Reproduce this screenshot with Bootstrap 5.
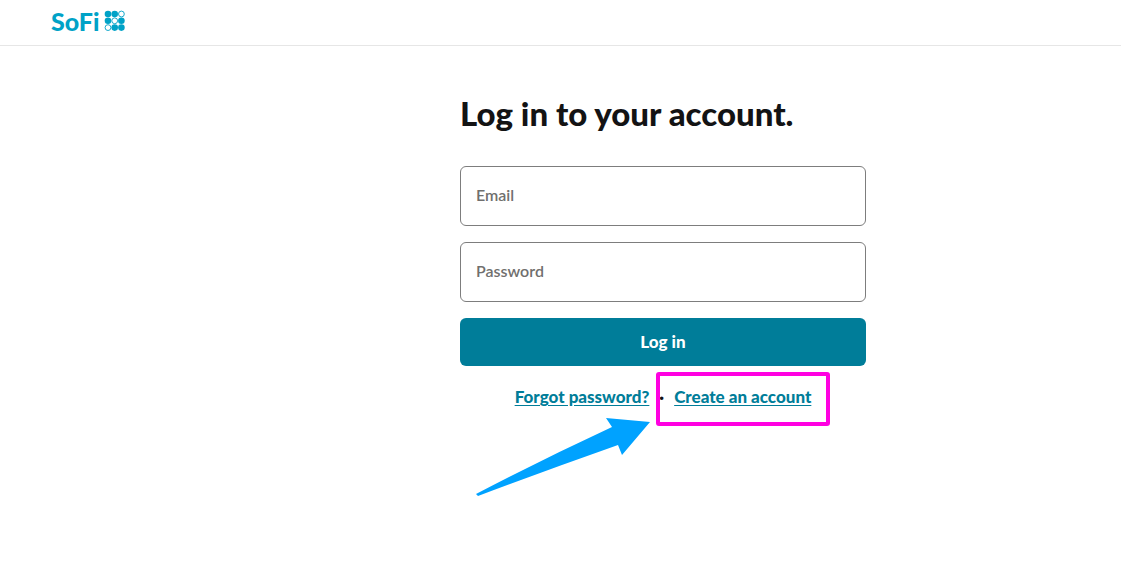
<!DOCTYPE html>
<html lang="en">
<head>
<meta charset="utf-8">
<meta name="viewport" content="width=device-width, initial-scale=1">
<title>Log in | SoFi</title>
<link href="https://cdn.jsdelivr.net/npm/bootstrap@5.3.0/dist/css/bootstrap.min.css" rel="stylesheet">
<style>
  :root { --teal: #007d99; --brand: #00a2c7; }
  body { font-family: Lato, "Liberation Sans", sans-serif; color: #131314; background: #fff; }
  .site-header { height: 46px; padding: 0 51px 4px; border-bottom: 1px solid #e6e6e6; }
  .brand { color: var(--brand); font-size: 25px; line-height: 40px; font-weight: 900; gap: 5px; }
  .login-area { padding: 47px 0 160px 205px; }
  .login-form { width: 406px; max-width: 100%; }
  .login-title { font-size: 33px; line-height: 40px; font-weight: 900; margin-bottom: 33px; }
  .form-floating > .login-field { height: 60px; padding: 0 15px; font-size: 16px; font-weight: 600; border: 1px solid #7d7d7d; border-radius: 6px; color: #131314; }
  .form-floating > .login-field:focus, .form-floating > .login-field:not(:placeholder-shown) { padding-top: 20px; }
  .form-floating > .login-label { display: flex; align-items: center; height: 60px; padding: 0 15px 2px; font-size: 16px; line-height: 24px; font-weight: 600; color: #706f6e; }
  .btn-login { height: 48px; font-size: 17px; font-weight: 900; color: #fff; background: var(--teal); border-radius: 6px; }
  .btn-login:hover { color: #fff; background: #006a82; }
  .login-links { font-size: 17px; line-height: 24px; font-weight: 900; margin-top: 19px; }
  .login-links a { color: var(--teal); text-underline-offset: 2px; }
  .separator { padding: 0 10px; }
  .highlight { top: -13px; left: -18px; right: -19px; height: 54px; border: 4px solid #ff00e1; border-radius: 3px; pointer-events: none; }
  .pointer { top: 31px; right: 215px; pointer-events: none; }
</style>
</head>
<body>
<header class="site-header d-flex align-items-center">
  <a class="brand d-flex align-items-center text-decoration-none" href="#" aria-label="SoFi home">
    <span>SoFi</span>
    <svg width="22" height="22" viewBox="0 0 22 22" fill="currentColor" stroke="currentColor" aria-hidden="true">
      <g stroke="none"><circle cx="4" cy="4" r="3.3"/><circle cx="10.7" cy="4" r="3.3"/><circle cx="4" cy="10.8" r="3.3"/><circle cx="17.4" cy="10.8" r="3.3"/><circle cx="10.7" cy="17.6" r="3.3"/><circle cx="17.4" cy="17.6" r="3.3"/></g>
      <g fill="none" stroke-width=".9"><circle cx="17.4" cy="4" r="2.9"/><circle cx="10.7" cy="10.8" r="2.9"/><circle cx="4" cy="17.6" r="2.9"/></g>
    </svg>
  </a>
</header>
<main class="login-area d-flex justify-content-center">
  <form class="login-form">
    <h1 class="login-title text-nowrap">Log in to your account.</h1>
    <div class="d-grid gap-3">
      <div class="form-floating"><input class="form-control login-field" id="email" type="email" placeholder=" "><label class="login-label" for="email">Email</label></div>
      <div class="form-floating"><input class="form-control login-field" id="password" type="password" placeholder=" "><label class="login-label" for="password">Password</label></div>
      <button class="btn btn-login" type="submit">Log in</button>
    </div>
    <div class="login-links position-relative d-flex justify-content-center text-nowrap">
      <a href="#">Forgot password?</a>
      <span class="separator">·</span>
      <span class="position-relative"><a href="#">Create an account</a><span class="highlight position-absolute"></span></span>
      <svg class="pointer position-absolute" width="176" height="82" viewBox="0 0 176 82" fill="#00a2ff" aria-hidden="true"><path d="M1 78Q66 44 137 11L131 2 175 6 147 39 143 29Q72 54 3 80Z"/></svg>
    </div>
  </form>
</main>
<script src="https://cdn.jsdelivr.net/npm/bootstrap@5.3.0/dist/js/bootstrap.bundle.min.js"></script>
</body>
</html>
